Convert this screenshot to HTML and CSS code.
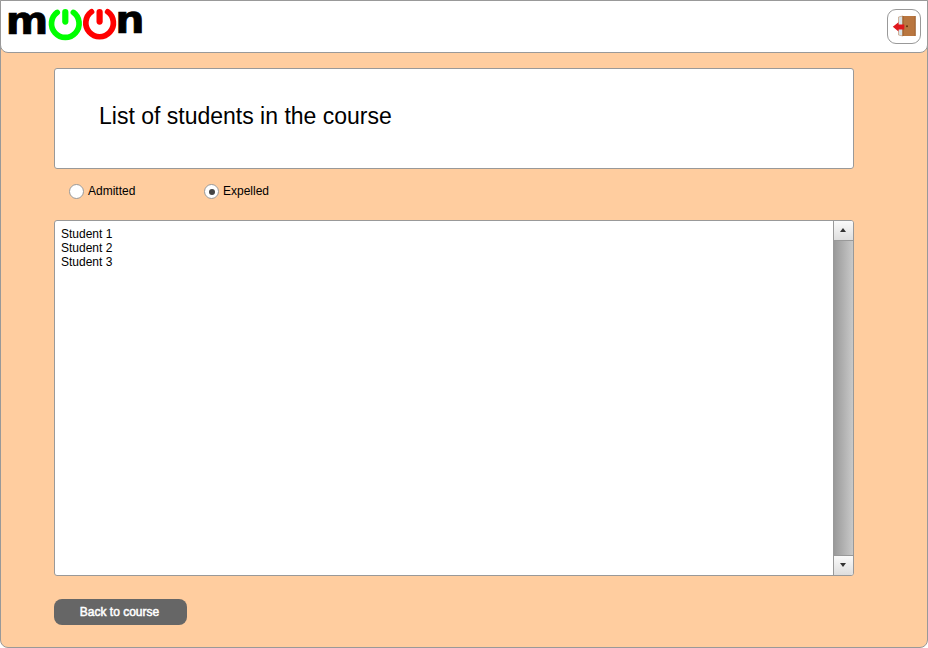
FILE: index.html
```html
<!DOCTYPE html>
<html lang="en">
<head>
<meta charset="utf-8">
<title>moon - List of students</title>
<link rel="stylesheet" href="styles.css">
</head>
<body>
<div class="app">
  <header class="topbar">
    <svg class="logo" width="170" height="50" viewBox="0 0 170 50" role="img" aria-label="moon">
      <text class="logo-letter" transform="translate(5.7 34) scale(1.09 1)">m</text>
      <g class="power on"><path d="M57.2 12.4A13.8 13.8 0 1 0 73.4 12.4"/><path class="stem" d="M65.3 12V21.6"/></g>
      <g class="power off"><path d="M91.5 11.8A13.8 13.8 0 1 0 107.7 11.8"/><path class="stem" d="M99.6 12V21.6"/></g>
      <text class="logo-letter" transform="translate(115.3 33) scale(1.1 1)">n</text>
    </svg>
    <button class="exit" aria-label="Exit">
      <svg width="24" height="24" viewBox="0 0 24 24">
        <path d="M6.5 2 11 1v20L6.5 20z" fill="#d8e3e8" stroke="#c9a385" stroke-width=".8"/>
        <path d="M10.5 1h13v20h-13z" fill="#b9763f"/>
        <path d="M11 1v20M23.2 1v20" stroke="#935a2b" stroke-width=".8"/>
        <circle cx="15" cy="11.2" r="1" fill="#63330f"/>
        <path d="M.8 11.8l5.7-4.6v2.3h5.8v5H6.5v2z" fill="#df171c"/>
      </svg>
    </button>
  </header>
  <main class="content">
    <section class="heading"><h1>List of students in the course</h1></section>
    <div class="filters">
      <label class="option"><span class="radio"></span>Admitted</label>
      <label class="option"><span class="radio checked"></span>Expelled</label>
    </div>
    <section class="list">
      <ul class="students"><li>Student 1</li><li>Student 2</li><li>Student 3</li></ul>
      <div class="scrollbar">
        <span class="step"><svg width="6" height="4" viewBox="0 0 6 4"><path d="M3 0 6 4H0z"/></svg></span>
        <span class="track"></span>
        <span class="step down"><svg width="6" height="4" viewBox="0 0 6 4"><path d="M0 0H6L3 4z"/></svg></span>
      </div>
    </section>
    <button class="back">Back to course</button>
  </main>
</div>
</body>
</html>
```
FILE: styles.css
```css
* { box-sizing: border-box; }
body {
  margin: 0;
  background: #fff;
  color: #000;
  font: 12px/14px "Liberation Sans", Arial, sans-serif;
}
.app {
  height: 648px;
  background: #ffcd9f;
  border: 1px solid #999;
  border-radius: 0 0 8px 8px;
}
.topbar {
  display: flex;
  justify-content: space-between;
  height: 53px;
  margin: -1px -1px 0;
  padding: 0 6px 0 0;
  background: #fff;
  border: 1px solid #999;
  border-radius: 0 0 8px 8px;
}
.logo { margin: -1px 0 0 -1px; overflow: visible; }
.logo-letter { font: bold 37.5px "DejaVu Sans", sans-serif; stroke: #000; stroke-width: .7px; }
.power { fill: none; stroke-width: 5.7; stroke-linecap: round; }
.stem { stroke-width: 6.2; }
.on { stroke: #0f0; }
.off { stroke: #f00; }
.exit {
  display: flex;
  align-items: center;
  justify-content: center;
  width: 34px;
  height: 35px;
  margin-top: 8px;
  padding: 0;
  background: #fff;
  border: 1px solid #999;
  border-radius: 9px;
}
.content {
  display: flex;
  flex-direction: column;
  align-items: flex-start;
  width: 800px;
  margin: 15px 0 0 53px;
}
.heading {
  width: 100%;
  height: 101px;
  padding: 33px 44px;
  background: #fff;
  border: 1px solid #999;
  border-radius: 3px;
}
h1 { margin: 0; font-size: 23px; line-height: 28px; font-weight: 400; }
.filters { display: flex; height: 51px; padding: 15px 0 0 15px; }
.option { display: flex; align-items: flex-start; width: 135px; gap: 4px; }
.radio {
  display: flex;
  align-items: center;
  justify-content: center;
  width: 15px;
  height: 15px;
  background: #fff;
  border: 1px solid #999;
  border-radius: 50%;
}
.checked::after { content: ""; width: 6px; height: 6px; border-radius: 50%; background: #444; }
.list {
  display: flex;
  width: 100%;
  height: 356px;
  background: #fff;
  border: 1px solid #999;
  border-radius: 3px;
  overflow: hidden;
}
.students { flex: 1; margin: 0; padding: 6px; list-style: none; }
.scrollbar { display: flex; flex-direction: column; width: 20px; border-left: 1px solid #999; }
.step {
  display: flex;
  align-items: center;
  justify-content: center;
  height: 20px;
  padding: 0 1px 1px 0;
  background: linear-gradient(#fafafa, #dedede);
  border-bottom: 1px solid #999;
  fill: #333;
}
.down { border-top: 1px solid #999; border-bottom: 0; }
.track { flex: 1; background: linear-gradient(90deg, #999, #c9c9c9); }
.back {
  width: 133px;
  height: 26px;
  margin-top: 23px;
  padding: 0 2px 0 0;
  background: #666;
  color: #fff;
  border: 0;
  border-radius: 8px;
  font: 12px/14px "Liberation Sans", Arial, sans-serif;
  -webkit-text-stroke: .5px #fff;
}
```
